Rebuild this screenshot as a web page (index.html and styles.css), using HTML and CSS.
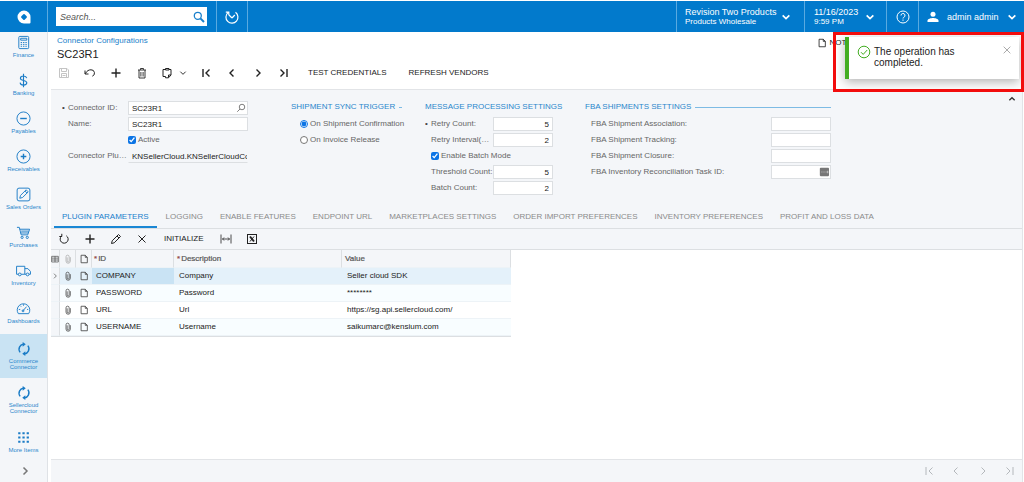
FILE: index.html
```html
<!DOCTYPE html>
<html lang="en">
<head>
<meta charset="utf-8">
<title>SC23R1 - Connector Configurations</title>
<link rel="stylesheet" href="styles.css">
</head>
<body>
<svg class="sprite" aria-hidden="true">
  <symbol id="chev-down" viewBox="0 0 12 12"><path d="M2 4l4 4 4-4"/></symbol>
  <symbol id="first" viewBox="0 0 12 12"><path d="M3 2v8M9.500 2.500L6 6l3.500 3.500"/></symbol>
  <symbol id="prev" viewBox="0 0 12 12"><path d="M7.500 2.500L4 6l3.500 3.500"/></symbol>
  <symbol id="next" viewBox="0 0 12 12"><path d="M4.500 2.500L8 6l-3.500 3.500"/></symbol>
  <symbol id="last" viewBox="0 0 12 12"><path d="M9 2v8M2.500 2.500L6 6 2.500 9.500"/></symbol>
  <symbol id="plus" viewBox="0 0 12 12"><path d="M6 1.500v9M1.500 6h9"/></symbol>
  <symbol id="page" viewBox="0 0 12 12"><path d="M2.500 1.500h5l2.500 2.500v6.500h-7.500zM7.500 1.500v2.500h2.500"/></symbol>
  <symbol id="clip" viewBox="0 0 12 12"><path d="M5 4v4.500a1.200 1.200 0 0 0 2.400 0V3.300a1.900 1.900 0 0 0-3.800 0v5.200a2.600 2.600 0 0 0 5.200 0V3.800" stroke-width=".9"/></symbol>
  <symbol id="sync" viewBox="0 0 16 16"><path d="M3.600 11.800A5.800 5.800 0 0 1 3 5.600 5.500 5.500 0 0 1 7 2.600M12.400 4.200A5.800 5.800 0 0 1 13 10.400 5.500 5.500 0 0 1 9 13.400" stroke-width="1.600"/><path d="M6.500 0L10 2.700 6.500 5.400zM9.500 10.600L6 13.300 9.500 16z" fill="currentColor" stroke="none"/></symbol>
</svg>

<header class="topbar">
  <a class="logo" href="#" aria-label="Home">
    <svg viewBox="0 0 16 16"><path d="M8 1.500a6.500 6.500 0 1 0 0 13h5.500a1 1 0 0 0 1-1V8A6.500 6.500 0 0 0 8 1.500z" fill="#fff" stroke="none"/><path d="M8 6L10 8 8 10 6 8z" fill="#027acc" stroke="#027acc" stroke-width="1.800" stroke-linejoin="round"/></svg>
  </a>
  <div class="search-cell">
    <form class="search">
      <input class="search-input" type="search" placeholder="Search..." aria-label="Search">
      <button class="search-btn" type="button" aria-label="Search"><svg class="i12" viewBox="0 0 12 12"><circle cx="4.800" cy="4.800" r="3.500" stroke-width="1.300"/><path d="M7.400 7.400l3.600 3.600" stroke-width="2"/></svg></button>
    </form>
  </div>
  <button class="top-cell history" type="button" aria-label="History">
    <svg class="i16" viewBox="0 0 16 16"><path d="M4 3.600a6 6 0 1 0 7.500-.3M1.800 3.200h3v3M8 9L5 6M8 9l2.800-3" stroke-width="1.200"/></svg>
  </button>
  <button class="top-cell company" type="button">
    <span class="two-line"><span>Revision Two Products</span><small>Products Wholesale</small></span>
    <svg class="i10 thick"><use href="#chev-down"/></svg>
  </button>
  <button class="top-cell date" type="button">
    <span class="two-line"><span>11/16/2023</span><small>9:59 PM</small></span>
    <svg class="i10 thick"><use href="#chev-down"/></svg>
  </button>
  <button class="top-cell help" type="button" aria-label="Help">
    <svg class="i16" viewBox="0 0 16 16"><circle cx="8" cy="8" r="6"/><path d="M6 6.500a2 2 0 1 1 2.800 1.800c-.6.300-.8.600-.8 1.200M8 10.500v1.300"/></svg>
  </button>
  <button class="top-cell user" type="button">
    <svg class="i12" viewBox="0 0 12 12"><circle cx="6" cy="3.300" r="2.500" fill="#fff" stroke="none"/><path d="M.5 11V9.800C.5 7.800 4 7 6 7s5.500.8 5.500 2.800V11z" fill="#fff" stroke="none"/></svg>
    <span>admin admin</span>
    <svg class="i10 thick"><use href="#chev-down"/></svg>
  </button>
</header>

<div class="body">
  <nav class="side" aria-label="Modules">
    <a class="side-item" href="#"><svg viewBox="0 0 16 16"><rect x="3" y="1.500" width="10.500" height="13" rx="1"/><path d="M5 3.500h6.500v2H5zM5 8h1.500M7.500 8H9M10 8h1.500M5 10h1.500M7.500 10H9M10 10h1.500M5 12h1.500M7.500 12H9M10 12h1.500"/></svg>Finance</a>
    <a class="side-item" href="#"><svg viewBox="0 0 16 16"><path d="M11.500 5.500C11 3.800 9.800 3.200 8 3.200c-2 0-3.300.9-3.300 2.300C4.700 8.900 11.500 7 11.500 10.500c0 1.500-1.500 2.400-3.500 2.400s-3.400-.9-3.600-2.600M8 .8v14.400" stroke-width="1.200"/></svg>Banking</a>
    <a class="side-item" href="#"><svg viewBox="0 0 16 16"><circle cx="8" cy="8" r="7"/><path d="M4.500 8h7" stroke-width="1.500"/></svg>Payables</a>
    <a class="side-item" href="#"><svg viewBox="0 0 16 16"><circle cx="8" cy="8" r="7"/><path d="M5 8h6M8 5v6" stroke-width="1.500"/></svg>Receivables</a>
    <a class="side-item" href="#"><svg viewBox="0 0 16 16"><rect x="1.200" y="1.200" width="13.600" height="13.600" rx="2"/><path d="M4 12l.8-3L10.800 3l2.200 2.200-6 6zM9.500 4.300l2.200 2.200"/></svg>Sales Orders</a>
    <a class="side-item" href="#"><svg viewBox="0 0 16 16"><path d="M1 2.500h2.500l2 8h7l2-6H4M5.500 6.500h8M5 8.500h8"/><circle cx="6.500" cy="13.200" r="1.200"/><circle cx="12" cy="13.200" r="1.200"/></svg>Purchases</a>
    <a class="side-item" href="#"><svg viewBox="0 0 16 16"><path d="M2.500 12H.6V3.500h8.800V12H5.500M9.400 6h3.300l2.700 3v3h-1.600M9.400 12h1.400"/><circle cx="4" cy="12.200" r="1.500"/><circle cx="12.300" cy="12.200" r="1.500"/></svg>Inventory</a>
    <a class="side-item short" href="#"><svg viewBox="0 0 16 16"><path d="M2.500 13.500a6.700 6.700 0 1 1 11 0zM7.300 10.500l4-4.500M3 9h1.500M4.500 5l1 1M8 3.500V5M11.800 9H13"/><circle cx="7.500" cy="10.500" r="1"/></svg>Dashboards</a>
    <a class="side-item tall active" href="#"><svg><use href="#sync"/></svg>Commerce Connector</a>
    <a class="side-item tall" href="#"><svg><use href="#sync"/></svg>Sellercloud Connector</a>
    <a class="side-item more" href="#"><svg viewBox="0 0 16 16"><path d="M3.500 3.500h.1M8 3.500h.1M12.500 3.500h.1M3.500 8h.1M8 8h.1M12.500 8h.1M3.500 12.500h.1M8 12.500h.1M12.500 12.500h.1" stroke-width="2.300" stroke-linecap="square"/></svg>More Items</a>
    <button class="side-more" type="button" aria-label="Expand menu"><svg class="i12 thick"><use href="#next"/></svg></button>
  </nav>

  <main class="main">
    <div class="head">
      <div>
        <a class="crumb" href="#">Connector Configurations</a>
        <h1 class="title">SC23R1</h1>
      </div>
      <button class="notes" type="button"><svg class="i10"><use href="#page"/></svg>NOTES</button>
    </div>

    <div class="toolbar page-tools">
      <button class="tool" type="button" aria-label="Save" disabled><svg class="i12" viewBox="0 0 12 12"><path d="M1.500 1.500h7.500l1.500 1.500v7.500h-9zM3.500 1.500v3h5v-3M3.500 10.500v-4h5v4M4.500 8.500h3"/></svg></button>
      <button class="tool" type="button" aria-label="Undo"><svg class="i12" viewBox="0 0 12 12"><path d="M1 3.500v3.500h3.500M1.200 6.800C3 3.500 5 2.800 7 2.800a3.300 3.300 0 0 1 1.300 6.400"/></svg></button>
      <button class="tool" type="button" aria-label="Add"><svg class="i12 thick"><use href="#plus"/></svg></button>
      <button class="tool" type="button" aria-label="Delete"><svg class="i12" viewBox="0 0 12 12"><path d="M2 3h8M4.500 2.800V1.500h3v1.300M3 3v8h6V3M4.900 5v4.500M7.100 5v4.500" stroke-width=".9"/></svg></button>
      <button class="tool wide" type="button" aria-label="Clipboard"><svg class="i12" viewBox="0 0 12 12"><path d="M4.500 2.500h-2.500v7h2.500M8 2.500h2v5.500L7.500 10.800h-3V9.500M4.500 1.500H8v1.500H4.500zM7.500 10.500V8h2.500"/></svg><svg class="i8 thick"><use href="#chev-down"/></svg></button>
      <button class="tool" type="button" aria-label="First"><svg class="i12 mid"><use href="#first"/></svg></button>
      <button class="tool" type="button" aria-label="Previous"><svg class="i12 mid"><use href="#prev"/></svg></button>
      <button class="tool" type="button" aria-label="Next"><svg class="i12 mid"><use href="#next"/></svg></button>
      <button class="tool" type="button" aria-label="Last"><svg class="i12 mid"><use href="#last"/></svg></button>
      <button class="tool text" type="button">TEST CREDENTIALS</button>
      <button class="tool text" type="button">REFRESH VENDORS</button>
    </div>

    <section class="panel">
      <form class="form">
        <div class="group connector">
          <div class="row"><label class="req" for="cid">Connector ID:</label><span class="lookup"><input class="box" id="cid" value="SC23R1"><svg class="i10" viewBox="0 0 12 12"><circle cx="7.200" cy="4.800" r="3.300"/><path d="M4.800 7.200L1.500 10.500"/></svg></span></div>
          <div class="row"><label for="cname">Name:</label><input class="box" id="cname" value="SC23R1"></div>
          <div class="row"><span></span><label class="check"><input type="checkbox" checked>Active</label></div>
          <div class="row"><label for="cplug">Connector Plugin:</label><input class="box plain" id="cplug" value="KNSellerCloud.KNSellerCloudConnector" readonly></div>
        </div>
        <fieldset class="group trigger">
          <legend><span>SHIPMENT SYNC TRIGGER</span></legend>
          <label class="check"><input type="radio" name="sync" checked>On Shipment Confirmation</label>
          <label class="check"><input type="radio" name="sync">On Invoice Release</label>
        </fieldset>
        <fieldset class="group message">
          <legend><span>MESSAGE PROCESSING SETTINGS</span></legend>
          <div class="row"><label class="req" for="retry">Retry Count:</label><input class="box num" id="retry" value="5"></div>
          <div class="row"><label for="interval">Retry Interval(Seconds):</label><input class="box num" id="interval" value="2"></div>
          <label class="check"><input type="checkbox" checked>Enable Batch Mode</label>
          <div class="row"><label for="threshold">Threshold Count:</label><input class="box num" id="threshold" value="5"></div>
          <div class="row"><label for="batch">Batch Count:</label><input class="box num" id="batch" value="2"></div>
        </fieldset>
        <fieldset class="group fba">
          <legend><span>FBA SHIPMENTS SETTINGS</span></legend>
          <div class="row"><label for="f1">FBA Shipment Association:</label><input class="box" id="f1"></div>
          <div class="row"><label for="f2">FBA Shipment Tracking:</label><input class="box" id="f2"></div>
          <div class="row"><label for="f3">FBA Shipment Closure:</label><input class="box" id="f3"></div>
          <div class="row"><label for="f4">FBA Inventory Reconciliation Task ID:</label><span class="lookup"><input class="box" id="f4"><svg class="i10" viewBox="0 0 12 12"><rect x="1" y="1" width="11" height="10" rx="1" fill="#777" stroke="none"/><path d="M3 6h1M5.500 6h1M8 6h1M10.500 4.500v3" stroke="#ddd"/></svg></span></div>
        </fieldset>
        <button class="collapse" type="button" aria-label="Collapse"><svg class="i8 thick" viewBox="0 0 12 12"><path d="M2 8l4-4 4 4"/></svg></button>
      </form>

      <div class="tabs" role="tablist">
        <button class="tab on" role="tab" type="button">PLUGIN PARAMETERS</button>
        <button class="tab" role="tab" type="button">LOGGING</button>
        <button class="tab" role="tab" type="button">ENABLE FEATURES</button>
        <button class="tab" role="tab" type="button">ENDPOINT URL</button>
        <button class="tab" role="tab" type="button">MARKETPLACES SETTINGS</button>
        <button class="tab" role="tab" type="button">ORDER IMPORT PREFERENCES</button>
        <button class="tab" role="tab" type="button">INVENTORY PREFERENCES</button>
        <button class="tab" role="tab" type="button">PROFIT AND LOSS DATA</button>
      </div>

      <div class="toolbar grid-tools">
        <button class="tool" type="button" aria-label="Refresh"><svg class="i12" viewBox="0 0 12 12"><path d="M3.500 3.200a4 4 0 1 0 4.800-.4M3.800.8v2.700H1.300"/></svg></button>
        <button class="tool" type="button" aria-label="Add row"><svg class="i12 thick"><use href="#plus"/></svg></button>
        <button class="tool" type="button" aria-label="Edit row"><svg class="i12" viewBox="0 0 12 12"><path d="M1.500 10.500l.7-2.700L8.500 1.500l2 2-6.300 6.300zM7 3l2 2"/></svg></button>
        <button class="tool" type="button" aria-label="Delete row"><svg class="i12" viewBox="0 0 12 12"><path d="M2.500 2.500l7 7M9.500 2.500l-7 7"/></svg></button>
        <button class="tool text" type="button">INITIALIZE</button>
        <button class="tool" type="button" aria-label="Fit columns"><svg class="i12" viewBox="0 0 12 12"><path d="M1 1.500v9M11 1.500v9M2.500 6h7M4 4.500L2.500 6 4 7.500M8 4.500L9.500 6 8 7.500" stroke-width=".8"/></svg></button>
        <button class="tool" type="button" aria-label="Export to Excel"><svg class="i12" viewBox="0 0 12 12"><rect x="1.500" y="1.500" width="9" height="9"/><path d="M4 3.500l4 5" stroke-width="2"/><path d="M8 3.500l-4 5"/></svg></button>
      </div>

      <div class="grid-area">
        <table class="grid">
          <colgroup><col class="c-mark"><col class="c-icon"><col class="c-icon"><col class="c-id"><col class="c-desc"><col class="c-val"></colgroup>
          <thead><tr>
            <th class="ic"><svg class="i8" viewBox="0 0 12 12"><path d="M1 2h10v8.500H1zM1 4.700h10M1 7.500h10M6 2v8.500"/></svg></th>
            <th class="ic faint"><svg class="i10"><use href="#clip"/></svg></th>
            <th class="ic"><svg class="i10"><use href="#page"/></svg></th>
            <th><i>*</i>ID</th><th><i>*</i>Description</th><th>Value</th>
          </tr></thead>
          <tbody>
            <tr class="sel"><td class="ic"><svg class="i8"><use href="#next"/></svg></td><td class="ic"><svg class="i10"><use href="#clip"/></svg></td><td class="ic"><svg class="i10"><use href="#page"/></svg></td><td class="cur">COMPANY</td><td>Company</td><td>Seller cloud SDK</td></tr>
            <tr><td class="ic"></td><td class="ic"><svg class="i10"><use href="#clip"/></svg></td><td class="ic"><svg class="i10"><use href="#page"/></svg></td><td>PASSWORD</td><td>Password</td><td>********</td></tr>
            <tr><td class="ic"></td><td class="ic"><svg class="i10"><use href="#clip"/></svg></td><td class="ic"><svg class="i10"><use href="#page"/></svg></td><td>URL</td><td>Url</td><td>https://sg.api.sellercloud.com/</td></tr>
            <tr><td class="ic"></td><td class="ic"><svg class="i10"><use href="#clip"/></svg></td><td class="ic"><svg class="i10"><use href="#page"/></svg></td><td>USERNAME</td><td>Username</td><td>saikumarc@kensium.com</td></tr>
          </tbody>
        </table>
      </div>

      <footer class="pager">
        <button class="tool" type="button" aria-label="First page"><svg class="i12"><use href="#first"/></svg></button>
        <button class="tool" type="button" aria-label="Previous page"><svg class="i12"><use href="#prev"/></svg></button>
        <button class="tool" type="button" aria-label="Next page"><svg class="i12"><use href="#next"/></svg></button>
        <button class="tool" type="button" aria-label="Last page"><svg class="i12"><use href="#last"/></svg></button>
      </footer>
    </section>
  </main>

  <div class="callout">
    <div class="toast" role="status">
      <svg class="i14" viewBox="0 0 14 14"><circle cx="7" cy="7" r="5.800"/><path d="M4 7.200l2.200 2.200L10.200 5"/></svg>
      <p>The operation has completed.</p>
      <button type="button" aria-label="Close"><svg class="i10" viewBox="0 0 12 12"><path d="M2 2l8 8M10 2l-8 8"/></svg></button>
    </div>
  </div>
</div>
</body>
</html>
```

FILE: styles.css
```css
* { box-sizing: border-box; }

body {
  margin: 0;
  padding-top: 1px;
  min-height: 100vh;
  display: flex;
  flex-direction: column;
  background: #fff;
  color: #222;
  font: 8px/10px "Liberation Sans", Arial, sans-serif;
}

button, input {
  margin: 0;
  font: inherit;
  color: inherit;
}

button {
  padding: 0;
  border: 0;
  background: none;
  white-space: nowrap;
}

a { text-decoration: none; }

svg {
  flex: none;
  fill: none;
  stroke: currentColor;
  stroke-width: 1;
}

.sprite { position: absolute; width: 0; height: 0; }
.i8 { width: 8px; height: 8px; }
.i10 { width: 10px; height: 10px; }
.i12 { width: 12px; height: 12px; }
.i14 { width: 14px; height: 14px; }
.i16 { width: 16px; height: 16px; }
.thick { stroke-width: 2; }
.mid, .tool .thick { stroke-width: 1.400; }

/* Top bar */
.topbar {
  display: flex;
  height: 31px;
  background: #027acc;
  color: #fff;
  font-size: 9px;
}

.logo {
  width: 47px;
  display: flex;
  align-items: center;
  justify-content: center;
}
.logo svg { width: 16px; height: 16px; }

.search-cell {
  width: 169px;
  padding: 6px 9px 6px 8px;
  border-left: 1px solid #5aaae0;
}

.search {
  display: flex;
  align-items: center;
  height: 19px;
  background: #fff;
}

.search-input {
  flex: 1;
  min-width: 0;
  padding: 0 4px;
  border: 0;
  outline: 0;
  background: none;
  color: #333;
}
.search-input::placeholder { color: #555; font-style: italic; }
.search-btn { display: flex; padding: 0 2px; color: #1a80cc; }

.top-cell {
  display: flex;
  align-items: center;
  border-left: 1px solid #5aaae0;
}
.history { width: 32px; justify-content: center; border-right: 1px solid #5aaae0; }
.company { width: 128px; margin-left: auto; padding-left: 8px; gap: 5px; }
.date { width: 82px; padding-left: 9px; gap: 7px; }
.help { width: 32px; justify-content: center; }
.user { width: 106px; padding-left: 8px; gap: 8px; }

.two-line {
  display: flex;
  flex-direction: column;
  text-align: left;
}
.two-line small { font-size: 8px; }

/* Side navigation */
.body {
  position: relative;
  flex: 1;
  display: flex;
}

.side {
  width: 48px;
  display: flex;
  flex-direction: column;
  background: #f4f6f9;
  border-right: 1px solid #dfe2e6;
}

.side-item {
  height: 38px;
  padding: 3px 4px 0;
  display: flex;
  flex-direction: column;
  align-items: center;
  gap: 2px;
  color: #2b87cc;
  font-size: 6px;
  line-height: 6px;
  text-align: center;
}
.side-item svg { width: 15px; height: 15px; color: #1b7cc6; }
.side-item.short { height: 36px; }
.side-item.tall { height: 44px; padding-top: 8px; }
.side-item.tall svg { width: 14px; height: 14px; }
.side-item.active { background: #c9e3f3; }
.side-item.more { padding-top: 8px; }

.side-more {
  display: flex;
  align-items: center;
  justify-content: center;
  height: 22px;
  padding-left: 3px;
  color: #777;
}
.side-more .thick { stroke-width: 1.500; }

/* Page head */
.main {
  flex: 1;
  min-width: 0;
  display: flex;
  flex-direction: column;
  padding: 0 1px 0 3px;
}

.head {
  display: flex;
  justify-content: space-between;
  align-items: flex-start;
  padding: 4px 166px 0 6px;
}
.crumb { color: #1a7fca; }
.title {
  margin: 2px 0 0;
  font-size: 11px;
  line-height: 13px;
  font-weight: 400;
}
.notes { display: flex; gap: 2px; padding-top: 2px; }

.toolbar {
  display: flex;
  align-items: center;
  gap: 2px;
  padding-left: 1px;
}
.page-tools { height: 28px; padding-bottom: 4px; }
.tool {
  width: 24px;
  height: 20px;
  display: flex;
  align-items: center;
  justify-content: center;
}
.tool:disabled { color: #c4c4c4; }
.tool.wide { width: 36px; gap: 6px; }
.tool.text { width: auto; padding: 0 10px; }

/* Main panel */
.panel {
  flex: 1;
  display: flex;
  flex-direction: column;
  background: #f4f6f9;
  border: solid #e2e4e7;
  border-width: 1px 1px 0 0;
}

.form {
  display: flex;
  align-items: flex-start;
  padding: 11px 6px 10px 11px;
  color: #666;
}

.group {
  display: flex;
  flex-direction: column;
  gap: 2px;
  margin: 0;
  padding: 0;
  border: 0;
  min-width: 0;
}
.connector { width: 186px; margin-right: 43px; }
.trigger { width: 111px; margin-right: 23px; }
.message { width: 128px; margin-right: 32px; }
.fba { width: 246px; }

legend {
  display: flex;
  align-items: center;
  gap: 4px;
  width: 100%;
  height: 16px;
  padding: 0 0 4px;
  color: #2a86cc;
  white-space: nowrap;
}
legend::after {
  content: "";
  flex: 1;
  height: 1px;
  background: #7dbbe4;
}

.row, .check {
  display: flex;
  align-items: center;
  height: 14px;
}
.row > :first-child {
  flex: 1;
  min-width: 0;
  padding-left: 6px;
  overflow: hidden;
  text-overflow: ellipsis;
  white-space: nowrap;
}
.row > .req { padding-left: 0; }
.req::before {
  content: "•";
  display: inline-block;
  width: 6px;
  color: #444;
}

.box {
  width: 100%;
  height: 14px;
  padding: 0 3px;
  border: 1px solid #dcdfe2;
  background: #fff;
  color: #222;
  outline: 0;
}
.box.plain {
  padding-right: 0;
  background: none;
  border-color: transparent transparent #dcdfe2;
}
.box.num { text-align: right; }
.connector .row > :last-child { width: 120px; }
.message .row > :last-child,
.fba .row > :last-child { width: 60px; }

.lookup { position: relative; }
.lookup svg { position: absolute; right: 2px; top: 2px; }

.check { gap: 2px; white-space: nowrap; }
.check input { width: 8px; height: 8px; accent-color: #0b74e5; }
.trigger .check { padding-left: 9px; }
.message .check { padding-left: 6px; }

.collapse { display: flex; margin: -6px 0 0 auto; color: #333; }

/* Tabs */
.tabs {
  display: flex;
  gap: 1px;
  padding-left: 3px;
  border-bottom: 1px solid #dcdfe2;
}
.tab {
  height: 23px;
  padding: 3px 8px 0;
  color: #8b8b8b;
  border-bottom: 2px solid transparent;
}
.tab.on { color: #1a80cc; border-color: #1a87d4; }

.grid-tools { height: 20px; }
.grid-tools .text { padding: 0 8px; }

/* Grid */
.grid-area {
  flex: 1;
  background: #fff;
  border-top: 1px solid #dcdfe2;
}
.grid {
  width: 460px;
  table-layout: fixed;
  border-collapse: separate;
  border-spacing: 0;
  border-bottom: 1px solid #dcdfe2;
}
.c-mark { width: 9px; }
.c-icon { width: 16px; }
.c-id { width: 82px; }
.c-desc { width: 168px; }

.grid th, .grid td {
  height: 17px;
  padding: 0 5px;
  text-align: left;
  border-bottom: 1px solid #edf3f7;
}
.grid th {
  padding: 0 3px;
  height: 18px;
  background: #f4f6f9;
  border-right: 1px solid #dcdfe2;
  color: #555;
  font-weight: 400;
  -webkit-text-stroke: 0.200px #555;
}
.grid th i { padding-right: 1px; color: #e33; font-style: normal; }
.grid th:nth-child(4) { padding-left: 2px; }
.grid td:nth-child(4) { padding-left: 4px; }
.grid .ic { padding: 0; text-align: center; color: #444; }
.grid .ic svg { display: block; margin: 0 auto; }
.grid .faint { color: #aaa; }
.grid td:first-child { background: #f4f6f9; border-right: 1px solid #dcdfe2; }
.grid tbody tr:nth-child(even) { background: #f8fdff; }
.grid .sel { background: #e4f1fa; }
.grid .cur { background: #c9e3f4; }

.pager {
  display: flex;
  justify-content: flex-end;
  align-items: center;
  gap: 3px;
  height: 23px;
  border-top: 1px solid #e2e4e7;
  color: #b4b8bc;
}

/* Notification */
.callout {
  position: absolute;
  top: 0;
  right: 0;
  width: 191px;
  padding: 2px 2px 10px 9px;
  border: 3px solid #f20d0d;
  overflow: hidden;
}
.toast {
  display: flex;
  align-items: flex-start;
  gap: 3px;
  min-height: 42px;
  padding: 8px 7px 0 8px;
  border-left: 4px solid #43ad22;
  background: #fff;
  box-shadow: 0 3px 10px rgba(0, 0, 0, 0.300);
  font-size: 10px;
  line-height: 11px;
}
.toast > svg { color: #43ad22; }
.toast p { flex: 1; margin: 1px 30px 0 0; }
.toast button { display: flex; color: #999; }
```
